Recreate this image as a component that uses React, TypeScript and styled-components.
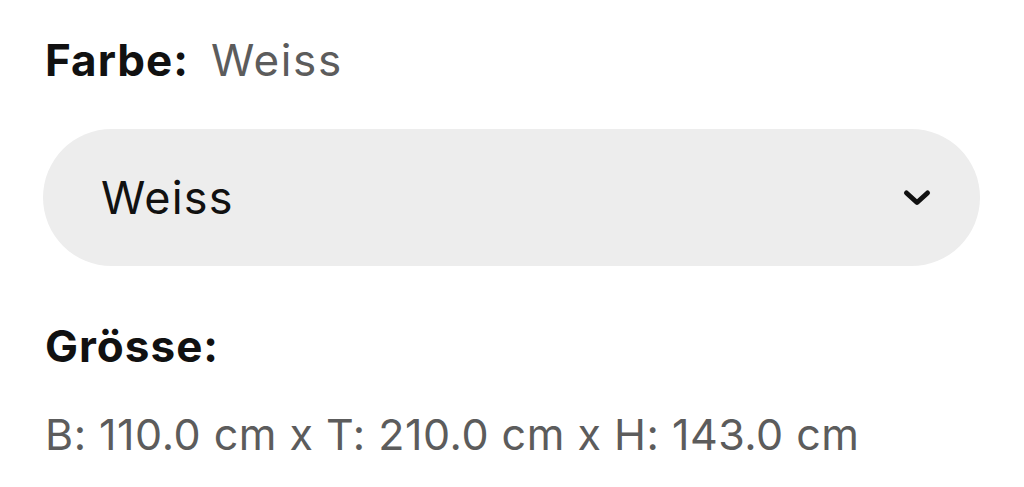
import styled, { createGlobalStyle } from 'styled-components'

const GlobalStyle = createGlobalStyle`
  body {
    margin: 0;
    background: #ffffff;
    font-family: Inter, 'Noto Sans', sans-serif;
  }
`

const Page = styled.div`
  padding: 30px 44px 0 43px;
  width: 1024px;
  box-sizing: border-box;
`

const Label = styled.div`
  display: flex;
  align-items: baseline;
  gap: 22px;
  font-size: 44px;
  line-height: 60px;
`

const LabelName = styled.span`
  font-weight: 700;
  color: #111111;
  padding-left: 2px;
  letter-spacing: 1px;
`

const LabelValue = styled.span`
  font-weight: 400;
  color: #5c5c5c;
  letter-spacing: 1.6px;
`

const Select = styled.div`
  margin-top: 39px;
  height: 137px;
  border-radius: 69px;
  background: #ededed;
  display: flex;
  align-items: center;
  justify-content: space-between;
  padding: 0 48px 0 58px;
  font-size: 45px;
  letter-spacing: 1.2px;
  color: #111111;
`

const SizeBlock = styled.div`
  margin-top: 50px;
  display: flex;
  flex-direction: column;
  gap: 28px;
`

const Dimensions = styled.div`
  font-size: 43px;
  line-height: 60px;
  color: #5c5c5c;
  padding-left: 2px;
  letter-spacing: 0.5px;
`

export default function App() {
  return (
    <>
      <GlobalStyle />
      <Page>
        <Label>
          <LabelName>Farbe:</LabelName>
          <LabelValue>Weiss</LabelValue>
        </Label>
        <Select>
          <span>Weiss</span>
          <svg width="30" height="20" viewBox="0 0 30 20">
            <path d="M4.5 5 L15 14.5 L25.5 5" fill="none" stroke="#111111" strokeWidth="5" strokeLinecap="round" strokeLinejoin="round" />
          </svg>
        </Select>
        <SizeBlock>
          <Label>
            <LabelName>Grösse:</LabelName>
          </Label>
          <Dimensions>B: 110.0 cm x T: 210.0 cm x H: 143.0 cm</Dimensions>
        </SizeBlock>
      </Page>
    </>
  )
}
